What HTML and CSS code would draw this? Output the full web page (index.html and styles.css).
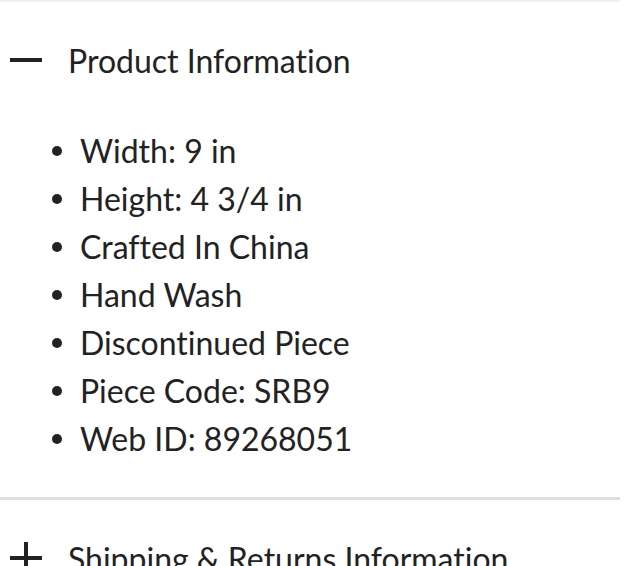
FILE: index.html
```html
<!DOCTYPE html>
<html lang="en">
<head>
    <meta charset="UTF-8">
    <meta name="viewport" content="width=device-width, initial-scale=1.0">
    <title>Product Information</title>
    <link rel="stylesheet" href="styles.css">
</head>
<body>
    <div class="accordion">
        <section class="panel open">
            <div class="panel-head">
                <span class="toggle minus"></span>
                <h2>Product Information</h2>
            </div>
            <ul class="details">
                <li>Width: 9 in</li>
                <li>Height: 4 3/4 in</li>
                <li>Crafted In China</li>
                <li>Hand Wash</li>
                <li>Discontinued Piece</li>
                <li>Piece Code: SRB9</li>
                <li>Web ID: 89268051</li>
            </ul>
        </section>
        <section class="panel">
            <div class="panel-head">
                <span class="toggle plus"></span>
                <h2>Shipping &amp; Returns Information</h2>
            </div>
        </section>
    </div>
</body>
</html>
```

FILE: styles.css
```css
* {
    margin: 0;
    padding: 0;
    box-sizing: border-box;
}

body {
    font-family: Lato, 'Liberation Sans', sans-serif;
    font-variant-ligatures: none;
    color: #222;
    background: #fff;
    overflow: hidden;
}

.accordion {
    width: 620px;
    border-top: 2px solid #f0f0f0;
}

.panel {
    border-bottom: 3px solid #dedede;
}

.panel-head {
    display: flex;
    align-items: center;
    gap: 26px;
    height: 116px;
    padding-left: 10px;
}

.panel-head h2 {
    font-weight: 400;
    font-size: 32px;
    white-space: nowrap;
}

.toggle {
    position: relative;
    width: 32px;
    height: 32px;
    flex-shrink: 0;
}

.toggle::before,
.toggle::after {
    content: '';
    position: absolute;
    background: #222;
}

.toggle::before {
    left: 0;
    right: 0;
    top: 14px;
    height: 4px;
}

.minus::after {
    display: none;
}

.plus::after {
    top: 0;
    bottom: 0;
    left: 14px;
    width: 4px;
}

.details {
    list-style: none;
    padding: 9px 0 34px 52px;
}

.details li {
    display: flex;
    align-items: center;
    font-size: 32px;
    line-height: 48px;
    white-space: nowrap;
}

.details li::before {
    content: '';
    width: 10px;
    height: 10px;
    border-radius: 50%;
    background: #222;
    margin-right: 18px;
}
```
